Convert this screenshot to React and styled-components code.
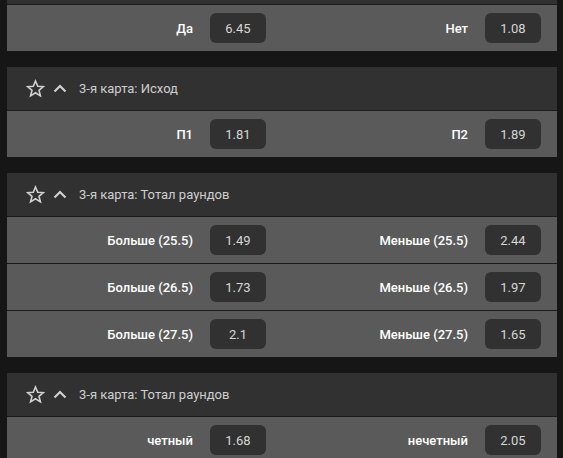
import React from "react";
import styled, { createGlobalStyle } from "styled-components";

const Global = createGlobalStyle`
  html, body {
    margin: 0;
    background: #161616;
    font-family: Roboto, "Liberation Sans", Arial, sans-serif;
    overflow: hidden;
  }
`;

//style
const Page = styled.div`
  padding: 0 6px 0 7px;
  margin-top: -39px;
`;

const Section = styled.section`
  margin-bottom: 16px;
`;

const Header = styled.div`
  height: 43px;
  background: #313131;
  display: flex;
  align-items: center;
  padding-left: 19px;
  color: #cfcfcf;
  font-size: 13px;
`;

const Star = styled.svg`
  width: 19px;
  height: 19px;
  margin-right: 8px;
`;

const Chevron = styled.svg`
  width: 14px;
  height: 9px;
  margin-right: 12px;
`;

const Row = styled.div`
  height: 46px;
  background: #5a5a5a;
  border-top: 1px solid #1b1b1b;
  display: flex;
`;

const Half = styled.div`
  flex: 1;
  display: flex;
  align-items: center;
  justify-content: flex-end;
  gap: 17px;
  padding-right: 16px;
`;

const Label = styled.span`
  color: #fff;
  font-size: 13px;
  font-weight: 500;
`;

const Odd = styled.div`
  width: 56px;
  height: 30px;
  border-radius: 6px;
  background: #313131;
  color: #d6d6d6;
  font-size: 13px;
  display: flex;
  align-items: center;
  justify-content: center;
`;

const sections = [
  { title: "", rows: [["Да", "6.45", "Нет", "1.08"]] },
  { title: "3-я карта: Исход", rows: [["П1", "1.81", "П2", "1.89"]] },
  {
    title: "3-я карта: Тотал раундов",
    rows: [
      ["Больше (25.5)", "1.49", "Меньше (25.5)", "2.44"],
      ["Больше (26.5)", "1.73", "Меньше (26.5)", "1.97"],
      ["Больше (27.5)", "2.1", "Меньше (27.5)", "1.65"],
    ],
  },
  { title: "3-я карта: Тотал раундов", rows: [["четный", "1.68", "нечетный", "2.05"]] },
];

//mark up
const App = () => (
  <>
    <Global />
    <Page>
      {sections.map((s, i) => (
        <Section key={i}>
          <Header>
            <Star viewBox="0 0 24 24" fill="none" stroke="#d0d0d0" strokeWidth="2" strokeLinejoin="miter">
              <polygon points="12,2.5 14.8,9.2 22,9.6 16.4,14.3 18.2,21.3 12,17.4 5.8,21.3 7.6,14.3 2,9.6 9.2,9.2" />
            </Star>
            <Chevron viewBox="0 0 14 9" fill="none" stroke="#d0d0d0" strokeWidth="2.2">
              <polyline points="1.5,7.5 7,2 12.5,7.5" />
            </Chevron>
            {s.title}
          </Header>
          {s.rows.map((r, j) => (
            <Row key={j}>
              <Half>
                <Label>{r[0]}</Label>
                <Odd>{r[1]}</Odd>
              </Half>
              <Half>
                <Label>{r[2]}</Label>
                <Odd>{r[3]}</Odd>
              </Half>
            </Row>
          ))}
        </Section>
      ))}
    </Page>
  </>
);

export default App;
